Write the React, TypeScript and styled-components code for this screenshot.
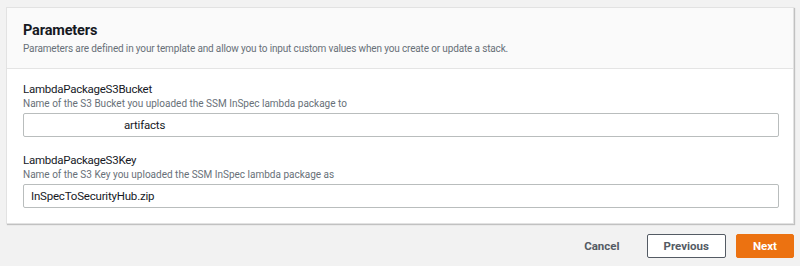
import styled, { createGlobalStyle } from 'styled-components';

const GlobalStyle = createGlobalStyle`
  html, body {
    margin: 0;
    padding: 0;
    background: #f2f2f2;
    font-family: Roboto, 'Open Sans', 'Liberation Sans', sans-serif;
  }
`;

const Page = styled.div`
  width: 800px;
  height: 266px;
  box-sizing: border-box;
  padding: 7px 6px 0 6px;
  display: flex;
  flex-direction: column;
`;

const Card = styled.section`
  background: #fff;
  border: 1px solid #e2e2e2;
  box-shadow: 1px 1px 1px 0 rgba(0, 0, 0, 0.2);
`;

const Header = styled.header`
  background: #fafafa;
  border-bottom: 1px solid #e4e4e4;
  padding: 13px 16px 0;
  height: 61px;
  box-sizing: border-box;
`;

const Title = styled.h2`
  margin: 0;
  font-size: 14.5px;
  line-height: 20px;
  letter-spacing: -0.15px;
  font-weight: 700;
  color: #16191f;
`;

const Description = styled.p`
  margin: 0;
  font-size: 10px;
  line-height: 16px;
  letter-spacing: -0.15px;
  color: #687078;
`;

const Body = styled.div`
  padding: 13px 16px 15px;
  display: flex;
  flex-direction: column;
  gap: 16px;
`;

const Field = styled.div`
  display: flex;
  flex-direction: column;
`;

const Label = styled.label`
  font-size: 11.5px;
  line-height: 15px;
  letter-spacing: -0.25px;
  color: #16191f;
`;

const Hint = styled.span`
  font-size: 10px;
  line-height: 14px;
  color: #687078;
  margin-bottom: 2px;
`;

const Input = styled.div<{ $indent?: number }>`
  height: 24px;
  box-sizing: border-box;
  width: 756px;
  border: 1px solid #b9bdbd;
  border-radius: 2px;
  padding: 0 7px 0 ${(p) => 7 + (p.$indent || 0)}px;
  display: flex;
  align-items: center;
  font-size: 11.5px;
  letter-spacing: -0.2px;
  color: #16191f;
  background: #fff;
`;

const Footer = styled.footer`
  display: flex;
  justify-content: flex-end;
  align-items: center;
  gap: 10px;
  margin-top: 10px;
`;

const Button = styled.button<{ $variant?: 'link' | 'normal' | 'primary' }>`
  font-family: inherit;
  font-size: 11.5px;
  font-weight: 700;
  height: 24px;
  box-sizing: border-box;
  border-radius: 2px;
  padding: 0 16px;
  cursor: pointer;
  border: 1px solid
    ${(p) => (p.$variant === 'primary' ? '#ec7211' : p.$variant === 'normal' ? '#545b64' : 'transparent')};
  background: ${(p) => (p.$variant === 'primary' ? '#ec7211' : p.$variant === 'normal' ? '#fff' : 'transparent')};
  color: ${(p) => (p.$variant === 'primary' ? '#fff' : '#545b64')};
`;

export default function App() {
  return (
    <>
      <GlobalStyle />
      <Page>
        <Card>
          <Header>
            <Title>Parameters</Title>
            <Description>
              Parameters are defined in your template and allow you to input custom values when you create or update a
              stack.
            </Description>
          </Header>
          <Body>
            <Field>
              <Label>LambdaPackageS3Bucket</Label>
              <Hint>Name of the S3 Bucket you uploaded the SSM InSpec lambda package to</Hint>
              <Input $indent={93}>artifacts</Input>
            </Field>
            <Field>
              <Label>LambdaPackageS3Key</Label>
              <Hint>Name of the S3 Key you uploaded the SSM InSpec lambda package as</Hint>
              <Input>InSpecToSecurityHub.zip</Input>
            </Field>
          </Body>
        </Card>
        <Footer>
          <Button $variant="link">Cancel</Button>
          <Button $variant="normal">Previous</Button>
          <Button $variant="primary">Next</Button>
        </Footer>
      </Page>
    </>
  );
}
